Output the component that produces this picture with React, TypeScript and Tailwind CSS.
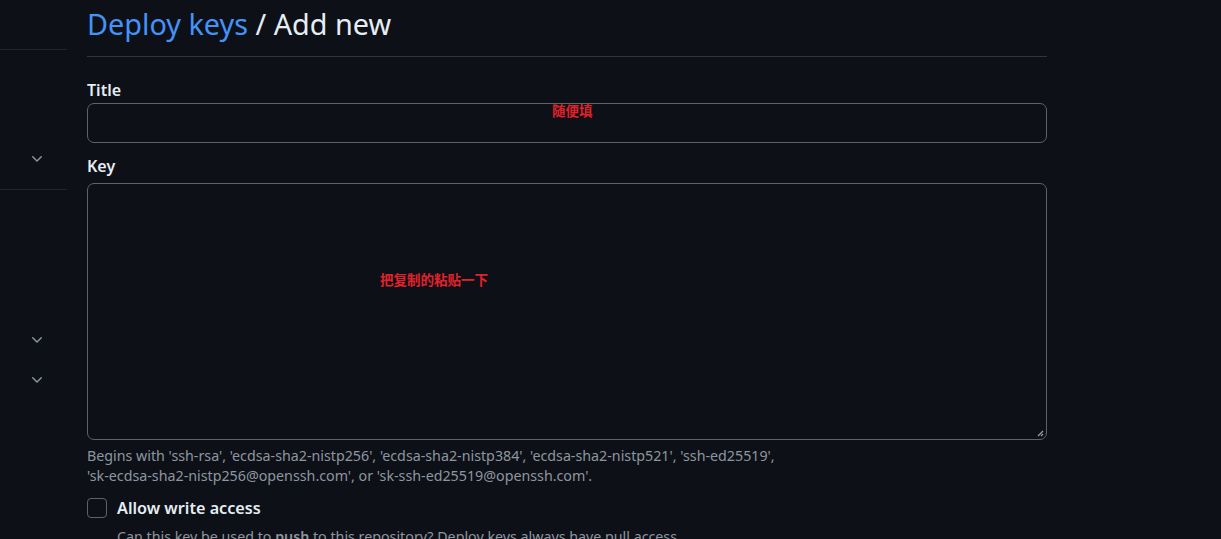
import React from "react";

const Chevron = () => (
  <svg width="16" height="16" viewBox="0 0 16 16" className="text-[#8b949e]" fill="currentColor">
    <path d="M12.78 5.22a.749.749 0 0 1 0 1.06l-4.25 4.25a.749.749 0 0 1-1.06 0L3.22 6.28a.749.749 0 1 1 1.06-1.06L8 8.939l3.72-3.719a.749.749 0 0 1 1.06 0Z" />
  </svg>
);

const App = () => {
  return (
    <div
      className="h-[539px] w-full overflow-hidden bg-[#0d1117] text-[#e6edf3] flex"
      style={{ fontFamily: '"Noto Sans", "Noto Sans CJK SC", sans-serif' }}
    >
      {/* Sidebar */}
      <aside className="w-[67px] shrink-0 flex flex-col">
        <div className="h-[50px] border-b border-[#21262d]" />
        <div className="h-[140px] border-b border-[#21262d] flex items-end justify-end pr-[22px] pb-[22px]">
          <Chevron />
        </div>
        <div className="flex flex-col items-end pr-[22px] pt-[142px] gap-[24px]">
          <Chevron />
          <Chevron />
        </div>
      </aside>

      {/* Main */}
      <main className="ml-[20px] w-[960px] shrink-0">
        <div className="h-[57px] border-b border-[#30363d] flex items-center">
          <h2 className="text-[28.8px] leading-none font-normal -mt-[8px]">
            <a className="text-[#4493f8]">Deploy keys</a> / Add new
          </h2>
        </div>

        <div className="pt-[22px]">
          <label className="block text-[16px] font-semibold leading-[22px]">Title</label>
          <div className="relative mt-[2px] h-[40px] rounded-[7px] border border-[#5d636b] bg-[#0d1117]">
            <span className="absolute left-[464px] top-[-3px] text-[13.5px] font-bold text-[#e3212b]">随便填</span>
          </div>
        </div>

        <div className="pt-[12px]">
          <label className="block text-[16px] font-semibold leading-[22px]">Key</label>
          <div className="relative mt-[6px] h-[257px] rounded-[7px] border border-[#5d636b] bg-[#0d1117]">
            <span className="absolute left-[292px] top-[86px] text-[13.5px] font-bold text-[#e3212b]">把复制的粘贴一下</span>
            <svg className="absolute right-[2px] bottom-[2px]" width="8" height="8" viewBox="0 0 8 8">
              <path d="M7 2 L2 7 M7 5 L5 7" stroke="#9aa0a6" strokeWidth="1.2" />
            </svg>
          </div>
          <p className="mt-[6px] text-[14.25px] leading-[20px] text-[#8d96a0]">
            Begins with 'ssh-rsa', 'ecdsa-sha2-nistp256', 'ecdsa-sha2-nistp384', 'ecdsa-sha2-nistp521', 'ssh-ed25519',
            <br />
            'sk-ecdsa-sha2-nistp256@openssh.com', or 'sk-ssh-ed25519@openssh.com'.
          </p>
        </div>

        <div className="mt-[12px] flex items-start gap-[10px]">
          <div className="w-[20px] h-[20px] rounded-[4px] border border-[#5d636b] shrink-0" />
          <div className="-mt-[1px]">
            <div className="text-[16.2px] font-semibold leading-[22px]">Allow write access</div>
            <div className="mt-[8px] text-[14.25px] leading-[20px] text-[#8d96a0]">
              Can this key be used to <strong className="text-[#8d96a0] font-semibold">push</strong> to this repository? Deploy keys always have pull access.
            </div>
          </div>
        </div>
      </main>
    </div>
  );
};

export default App;
